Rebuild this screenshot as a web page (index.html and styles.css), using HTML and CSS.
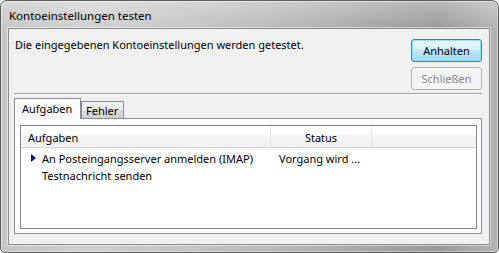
FILE: index.html
```html
<!DOCTYPE html>
<html lang="de">
<head>
<meta charset="utf-8">
<title>Kontoeinstellungen testen</title>
<link rel="stylesheet" href="styles.css">
</head>
<body>
<div class="window">
  <div class="titlebar">Kontoeinstellungen testen</div>
  <div class="client">
    <div class="top">
      <div class="message">Die eingegebenen Kontoeinstellungen werden getestet.</div>
      <div class="buttons">
        <button class="btn btn-default">Anhalten</button>
        <button class="btn btn-disabled" disabled>Schließen</button>
      </div>
    </div>
    <div class="separator"></div>
    <div class="tabs">
      <div class="tab tab-active">Aufgaben</div>
      <div class="tab">Fehler</div>
    </div>
    <div class="panel">
      <div class="list">
        <div class="list-header">
          <div class="col col-task">Aufgaben</div>
          <div class="col col-status">Status</div>
          <div class="col col-rest"></div>
        </div>
        <div class="row row-first">
          <div class="cell cell-task"><span class="marker"></span>An Posteingangsserver anmelden (IMAP)</div>
          <div class="cell cell-status">Vorgang wird ...</div>
        </div>
        <div class="row">
          <div class="cell cell-task">Testnachricht senden</div>
          <div class="cell cell-status"></div>
        </div>
      </div>
    </div>
  </div>
</div>
</body>
</html>
```

FILE: styles.css
```css
* { box-sizing: border-box; }
html, body { margin: 0; padding: 0; background: #ffffff; }
body {
  font-family: "Noto Sans", "Open Sans", "DejaVu Sans", sans-serif;
  font-size: 11px;
  color: #000;
}
.window {
  width: 499px;
  height: 253px;
  border: 1px solid #5e5e5e;
  border-radius: 7px 7px 5px 5px;
  background:
    linear-gradient(to bottom, rgba(255,255,255,0.3) 0px, rgba(255,255,255,0) 28px),
    linear-gradient(to right, #c6c6c6 0%, #d0d0d0 18%, #c3c3c3 40%, #b9b9b9 55%, #a6a6a6 75%, #9a9a9a 88%, #b4b4b4 100%);
  box-shadow: inset 1px 1px 0 rgba(255,255,255,0.5), inset -1px -1px 0 rgba(255,255,255,0.35);
  padding: 0 8px 7px 7px;
  display: flex;
  flex-direction: column;
}
.titlebar {
  height: 27px;
  line-height: 29px;
  padding-left: 1px;
  font-size: 11.5px;
  color: #000;
  white-space: nowrap;
}
.client {
  flex: 1;
  background: #f0f0f0;
  border: 1px solid #8d8d8d;
  box-shadow: 0 0 0 1px rgba(255,255,255,0.5);
  display: flex;
  flex-direction: column;
  padding: 10px 6px 10px 5px;
}
.top {
  display: flex;
  justify-content: space-between;
  align-items: flex-start;
}
.message {
  margin-top: -2px;
  line-height: 15px;
  padding-left: 1px;
  white-space: nowrap;
}
.buttons {
  display: flex;
  flex-direction: column;
  gap: 5px;
  padding-right: 1px;
}
.btn {
  width: 71px;
  height: 23px;
  font-family: inherit;
  font-size: 11px;
  border-radius: 3px;
  padding: 0;
  margin: 0;
}
.btn-default {
  border: 1px solid #3c7fb1;
  background: linear-gradient(to bottom, #eaf6fd 0%, #d9f0fc 45%, #bee6fd 50%, #a7d9f5 100%);
  box-shadow: inset 0 0 0 1px #8ee3f9;
  color: #000;
}
.btn-disabled {
  border: 1px solid #adb2b5;
  background: #f4f4f4;
  color: #838383;
}
.separator {
  margin-top: 3px;
  height: 2px;
  border-top: 1px solid #a0a0a0;
  border-bottom: 1px solid #ffffff;
  margin-right: 1px;
}
.tabs {
  display: flex;
  align-items: flex-end;
  margin-top: 3px;
  height: 20px;
  position: relative;
  z-index: 1;
}
.tab {
  height: 17px;
  line-height: 18px;
  padding: 0 5px 0 4px;
  border: 1px solid #898c95;
  border-bottom: none;
  background: linear-gradient(to bottom, #f2f2f2 0%, #ebebeb 50%, #dddddd 51%, #cfcfcf 100%);
  width: 43px;
  white-space: nowrap;
}
.tab-active {
  height: 21px;
  line-height: 19px;
  width: 67px;
  padding-left: 7px;
  background: #fcfcfc;
  margin-bottom: -1px;
}
.panel {
  height: 116px;
  border: 1px solid #898c95;
  background: #fcfcfc;
  padding: 6px 4px 4px 5px;
  margin-right: 1px;
}
.list {
  height: 100%;
  border: 1px solid #828790;
  background: #ffffff;
}
.list-header {
  display: flex;
  height: 22px;
  background: linear-gradient(to bottom, #ffffff 0%, #ffffff 40%, #f4f5f7 41%, #f1f2f4 100%);
  border-bottom: 1px solid #d5d5d5;
}
.col {
  line-height: 23px;
  border-right: 1px solid #e3e4e6;
}
.col-task { width: 250px; padding-left: 7px; }
.col-status { width: 101px; text-align: center; }
.col-rest { flex: 1; border-right: none; }
.row {
  display: flex;
  height: 17px;
  line-height: 17px;
  white-space: nowrap;
}
.row-first { margin-top: 2px; }
.cell-task {
  width: 250px;
  padding-left: 21px;
  position: relative;
}
.cell-status {
  padding-left: 8px;
}
.marker {
  position: absolute;
  left: 10px;
  top: 4px;
  width: 0;
  height: 0;
  border-top: 4px solid transparent;
  border-bottom: 4px solid transparent;
  border-left: 5px solid #14146e;
}
```
